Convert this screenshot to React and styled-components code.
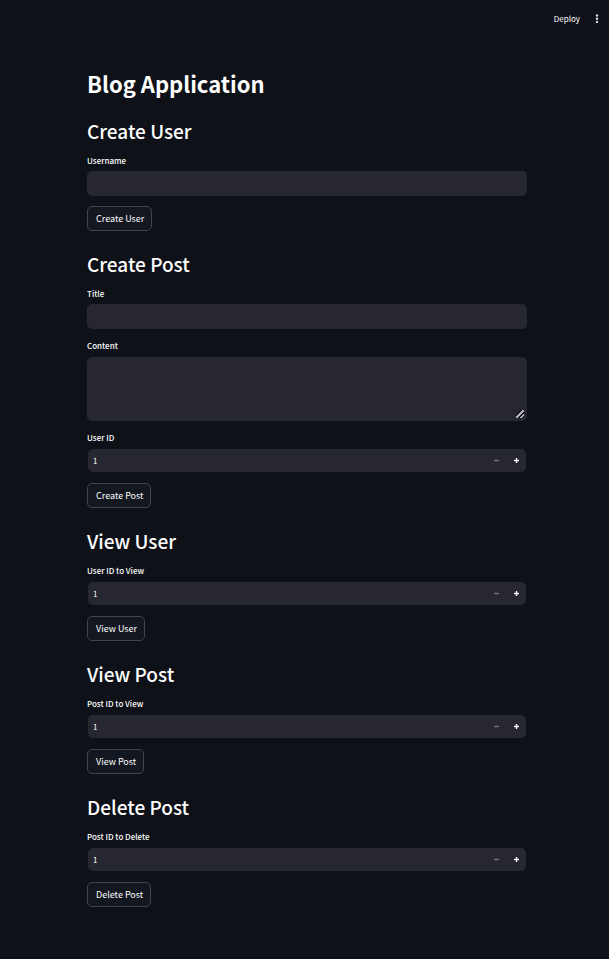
import React, { useState } from "react";
import styled, { createGlobalStyle } from "styled-components";

const GlobalStyle = createGlobalStyle`
  *, *::before, *::after { box-sizing: border-box; }
  body {
    margin: 0;
    background: #0e1117;
    color: #fff;
    font-family: "Noto Sans CJK SC", "Noto Sans", sans-serif;
    color-scheme: dark;
  }
  button, input, textarea { font: inherit; color: inherit; }
`;

const Toolbar = styled.header`
  display: flex;
  justify-content: flex-end;
  align-items: center;
  gap: 12px;
  height: 38px;
  padding-right: 7px;
`;

const ToolbarButton = styled.button`
  display: flex;
  align-items: center;
  padding: 0;
  border: 0;
  background: none;
  font-size: 8px;
  line-height: 14px;
  cursor: pointer;
`;

const Main = styled.main`
  padding: 28px 82px 52px 87px;
`;

const Title = styled.h1`
  margin: 0 0 14px;
  font-size: 22px;
  font-weight: 700;
  line-height: 35px;
`;

const Form = styled.form`
  display: flex;
  flex-direction: column;
  gap: 10px;
  margin-bottom: 17px;
`;

const Heading = styled.h2`
  margin: 0 0 -3px;
  font-size: 19px;
  font-weight: 500;
  line-height: 32px;
`;

const Field = styled.div`
  display: flex;
  flex-direction: column;
  gap: ${({ $gap }) => $gap || 3}px;
`;

const Label = styled.label`
  align-self: flex-start;
  font-size: 8px;
  font-weight: 500;
  line-height: 14px;
`;

const TextInput = styled.input`
  width: 100%;
  height: 25px;
  padding: 0 7px;
  border: 0;
  border-radius: 5px;
  background: #262730;
  font-size: 8px;
  outline-color: #ff4b4b;
`;

const TextArea = styled.textarea`
  display: block;
  width: 100%;
  height: 64px;
  padding: 6px 7px;
  border: 0;
  border-radius: 5px;
  background: #262730;
  font-size: 8px;
  resize: vertical;
  outline-color: #ff4b4b;

  &::-webkit-resizer {
    background: linear-gradient(
        135deg,
        transparent 30%,
        #0e1117 30% 40%,
        #b4b4b8 40% 62%,
        #0e1117 62% 74%,
        #b4b4b8 74% 86%,
        transparent 86%
      )
      4px 4px / 8px 8px no-repeat;
  }
`;

const NumberBox = styled.div`
  display: flex;
  height: 23px;
  margin: 1px;
  border-radius: 5px;
  background: #262730;
  overflow: hidden;
`;

const NumberInput = styled.input`
  flex: 1;
  min-width: 0;
  padding: 0 5px;
  border: 0;
  background: none;
  font-size: 8px;
  outline: none;
  appearance: textfield;

  &::-webkit-inner-spin-button { display: none; }
`;

const StepButton = styled.button`
  display: grid;
  place-items: center;
  width: 20px;
  padding: 0;
  border: 0;
  background: none;
  color: ${({ disabled }) => (disabled ? "#777883" : "#fff")};
`;

const SubmitButton = styled.button`
  align-self: flex-start;
  height: 25px;
  padding: 0 7px 0 8px;
  border: 1px solid #41444c;
  border-radius: 5px;
  background: #131720;
  font-size: 9px;
  line-height: 14px;
  cursor: pointer;
`;

function TextField({ id, label }) {
  return (
    <Field>
      <Label htmlFor={id}>{label}</Label>
      <TextInput id={id} type="text" />
    </Field>
  );
}

function NumberField({ id, label }) {
  const [value, setValue] = useState(1);
  return (
    <Field>
      <Label htmlFor={id}>{label}</Label>
      <NumberBox>
        <NumberInput
          id={id}
          type="number"
          min="1"
          value={value}
          onChange={(e) => setValue(Number(e.target.value))}
        />
        <StepButton type="button" aria-label="Decrease" disabled={value <= 1} onClick={() => setValue(value - 1)}>
          <svg width="5" height="5" viewBox="0 0 5 5">
            <path d="M0 2h5v1H0z" fill="currentColor" stroke="currentColor" strokeWidth=".3" />
          </svg>
        </StepButton>
        <StepButton type="button" aria-label="Increase" onClick={() => setValue(value + 1)}>
          <svg width="5" height="5" viewBox="0 0 5 5">
            <path d="M0 2h2V0h1v2h2v1H3v2H2V3H0z" fill="currentColor" stroke="currentColor" strokeWidth=".4" />
          </svg>
        </StepButton>
      </NumberBox>
    </Field>
  );
}

function Section({ title, children }) {
  return (
    <Form onSubmit={(e) => e.preventDefault()}>
      <Heading>{title}</Heading>
      {children}
      <SubmitButton type="submit">{title}</SubmitButton>
    </Form>
  );
}

export default function App() {
  return (
    <>
      <GlobalStyle />
      <Toolbar>
        <ToolbarButton type="button">Deploy</ToolbarButton>
        <ToolbarButton type="button" aria-label="Main menu">
          <svg width="10" height="10" viewBox="0 0 10 10" fill="#d8d8da">
            <circle cx="5" cy="1.5" r="1.2" />
            <circle cx="5" cy="4.7" r="1.2" />
            <circle cx="5" cy="7.9" r="1.2" />
          </svg>
        </ToolbarButton>
      </Toolbar>
      <Main>
        <Title>Blog Application</Title>
        <Section title="Create User">
          <TextField id="username" label="Username" />
        </Section>
        <Section title="Create Post">
          <TextField id="title" label="Title" />
          <Field $gap={4}>
            <Label htmlFor="content">Content</Label>
            <TextArea id="content" />
          </Field>
          <NumberField id="user-id" label="User ID" />
        </Section>
        <Section title="View User">
          <NumberField id="view-user-id" label="User ID to View" />
        </Section>
        <Section title="View Post">
          <NumberField id="view-post-id" label="Post ID to View" />
        </Section>
        <Section title="Delete Post">
          <NumberField id="delete-post-id" label="Post ID to Delete" />
        </Section>
      </Main>
    </>
  );
}
